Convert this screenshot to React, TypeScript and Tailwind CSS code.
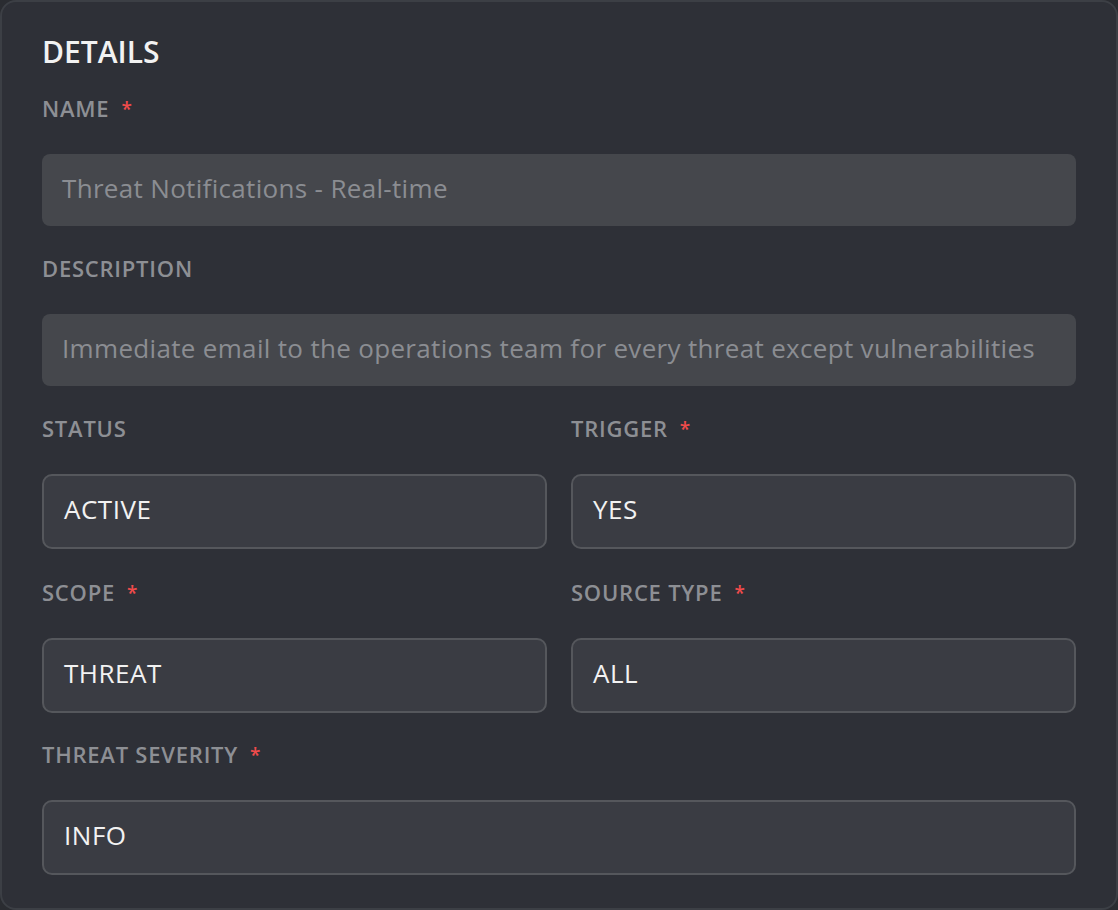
const font = { fontFamily: '"Open Sans", "Noto Sans", sans-serif' };

const Label = ({ text, required }: { text: string; required?: boolean }) => (
  <div className="flex items-start h-7 text-[22px] leading-7 font-semibold tracking-[0.035em] text-[#8d8f94]">
    <span>{text}</span>
    {required && <span className="ml-3 mt-[5px] text-[#f04b4b] text-[19px] leading-5">*</span>}
  </div>
);

const TextField = ({ value }: { value: string }) => (
  <div className="mt-8 h-[72px] rounded-lg bg-[#45474c] px-5 pb-1 flex items-center text-[26px] tracking-[0.0125em] text-[#8b8d92] whitespace-nowrap overflow-hidden">
    {value}
  </div>
);

const SelectField = ({ value }: { value: string }) => (
  <div className="mt-8 h-[75px] rounded-[10px] border-2 border-[#55575c] bg-[#3a3c43] pl-5 pb-1 flex items-center text-[26px] tracking-[0.02em] text-[#f2f2f2]">
    {value}
  </div>
);

export default function App() {
  return (
    <div className="min-h-screen bg-[#2a2c31]" style={font}>
      <div className="w-[1118px] h-[910px] rounded-2xl border-2 border-[#3c3f45] bg-[#2e3037] px-10 pt-8">
        <h2 className="text-[30px] leading-9 font-semibold text-[#f2f2f2]">DETAILS</h2>

        <div className="mt-6">
          <Label text="NAME" required />
          <TextField value="Threat Notifications - Real-time" />
        </div>

        <div className="mt-7">
          <Label text="DESCRIPTION" />
          <TextField value="Immediate email to the operations team for every threat except vulnerabilities" />
        </div>

        <div className="mt-7 grid grid-cols-2 gap-x-6">
          <div>
            <Label text="STATUS" />
            <SelectField value="ACTIVE" />
          </div>
          <div>
            <Label text="TRIGGER" required />
            <SelectField value="YES" />
          </div>
        </div>

        <div className="mt-[29px] grid grid-cols-2 gap-x-6">
          <div>
            <Label text="SCOPE" required />
            <SelectField value="THREAT" />
          </div>
          <div>
            <Label text="SOURCE TYPE" required />
            <SelectField value="ALL" />
          </div>
        </div>

        <div className="mt-[27px]">
          <Label text="THREAT SEVERITY" required />
          <SelectField value="INFO" />
        </div>
      </div>
    </div>
  );
}
